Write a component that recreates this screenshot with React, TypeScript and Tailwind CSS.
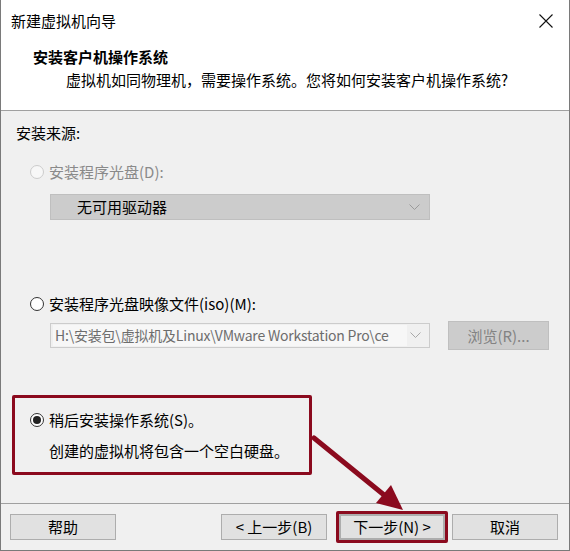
import React from 'react'

const font = { fontFamily: '"Noto Sans CJK SC", "Noto Sans", sans-serif' }

function Radio({ state }: { state: 'disabled' | 'off' | 'on' }) {
  if (state === 'disabled')
    return <span className="h-[14px] w-[14px] shrink-0 rounded-full border border-[#cccccc] bg-[#f7f7f7]" />
  return (
    <span className="flex h-[14px] w-[14px] shrink-0 items-center justify-center rounded-full border border-[#333] bg-white">
      {state === 'on' && <span className="h-[8px] w-[8px] rounded-full bg-[#222]" />}
    </span>
  )
}

function Chevron({ color }: { color: string }) {
  return (
    <svg width="11" height="7" viewBox="0 0 11 7" className="shrink-0">
      <path d="M0.5 0.5 L5.5 5.5 L10.5 0.5" fill="none" stroke={color} strokeWidth="1" />
    </svg>
  )
}

function Btn({ children, className = '' }: { children: React.ReactNode; className?: string }) {
  return (
    <div
      className={`flex h-[26px] w-[106px] items-center justify-center border border-[#adadad] bg-[#e1e1e1] text-[15px] text-black ${className}`}
    >
      {children}
    </div>
  )
}

export default function App() {
  return (
    <div className="relative flex h-[551px] w-[570px] flex-col overflow-hidden border-x border-b border-[#7a7a7a] bg-[#f0f0f0] text-[15px] leading-[20px] text-black" style={font}>
      {/* header */}
      <div className="flex h-[111px] flex-col border-b border-[#a0a0a0] bg-white">
        <div className="flex h-[42px] items-center justify-between pl-[10px] pr-[16px]">
          <span>新建虚拟机向导</span>
          <svg width="14" height="14" viewBox="0 0 14 14">
            <path d="M0.5 0.5 L13.5 13.5 M13.5 0.5 L0.5 13.5" stroke="#111" strokeWidth="1.1" />
          </svg>
        </div>
        <div className="pl-[32px] pt-[5px] font-bold">安装客户机操作系统</div>
        <div className="pl-[65px] pt-[3px]">虚拟机如同物理机，需要操作系统。您将如何安装客户机操作系统?</div>
      </div>

      {/* body */}
      <div className="flex h-[392px] flex-col pl-[15px] pt-[12px]">
        <div>安装来源:</div>

        <div className="mt-[19px] flex items-center gap-[5px] pl-[14px] text-[#8a8a8a]">
          <Radio state="disabled" />
          <span>安装程序光盘(D):</span>
        </div>
        <div className="ml-[34px] mt-[12px] flex h-[26px] w-[380px] items-center justify-between border border-[#bfbfbf] bg-[#cccccc] pl-[26px] pr-[9px]">
          <span>无可用驱动器</span>
          <Chevron color="#9a9a9a" />
        </div>

        <div className="mt-[74px] flex items-center gap-[5px] pl-[14px]">
          <Radio state="off" />
          <span>安装程序光盘映像文件(iso)(M):</span>
        </div>
        <div className="mt-[7px] flex items-start gap-[18px] pl-[34px]">
          <div className="mt-[2px] flex h-[25px] w-[380px] items-center justify-between border border-[#cccccc] bg-[#f0f0f0] pl-[2px] pr-[8px]">
            <div className="h-[21px] w-[354px] overflow-hidden whitespace-nowrap bg-[#f7f7f7] pl-[2px] text-[14px] leading-[21px] tracking-[-0.2px] text-[#6d6d6d]">
              H:\安装包\虚拟机及Linux\VMware Workstation Pro\ce
            </div>
            <Chevron color="#a8a8a8" />
          </div>
          <div className="flex h-[29px] w-[101px] items-center justify-center border border-[#bfbfbf] bg-[#cccccc] text-[#838383]">
            浏览(R)...
          </div>
        </div>

        <div className="-ml-[4px] mt-[45px] flex h-[80px] w-[300px] flex-col rounded-[2px] border-[3px] border-[#8b0a1e] pl-[15px] pt-[12px]">
          <div className="flex items-center gap-[5px]">
            <Radio state="on" />
            <span>稍后安装操作系统(S)。</span>
          </div>
          <div className="mt-[11px] pl-[19px]">创建的虚拟机将包含一个空白硬盘。</div>
        </div>
      </div>

      {/* footer */}
      <div className="flex flex-1 items-start border-t border-[#a0a0a0] pl-[9px] pt-[10px]">
        <Btn>帮助</Btn>
        <Btn className="ml-[105px]">&lt; 上一步(B)</Btn>
        <div className="relative ml-[12px]">
          <Btn className="border-2 border-[#0078d7]">下一步(N) &gt;</Btn>
          <div className="absolute -inset-x-[3px] -inset-y-[3px] rounded-[2px] border-[3px] border-[#8b0a1e]" />
        </div>
        <Btn className="ml-[7px]">取消</Btn>
      </div>

      {/* annotation arrow */}
      <svg className="pointer-events-none absolute left-0 top-0" width="570" height="551">
        <line x1="313" y1="438" x2="388" y2="499" stroke="#8b0a1e" strokeWidth="5" strokeLinecap="round" />
        <polygon points="402,510 375,503 390,485" fill="#8b0a1e" />
      </svg>
    </div>
  )
}
